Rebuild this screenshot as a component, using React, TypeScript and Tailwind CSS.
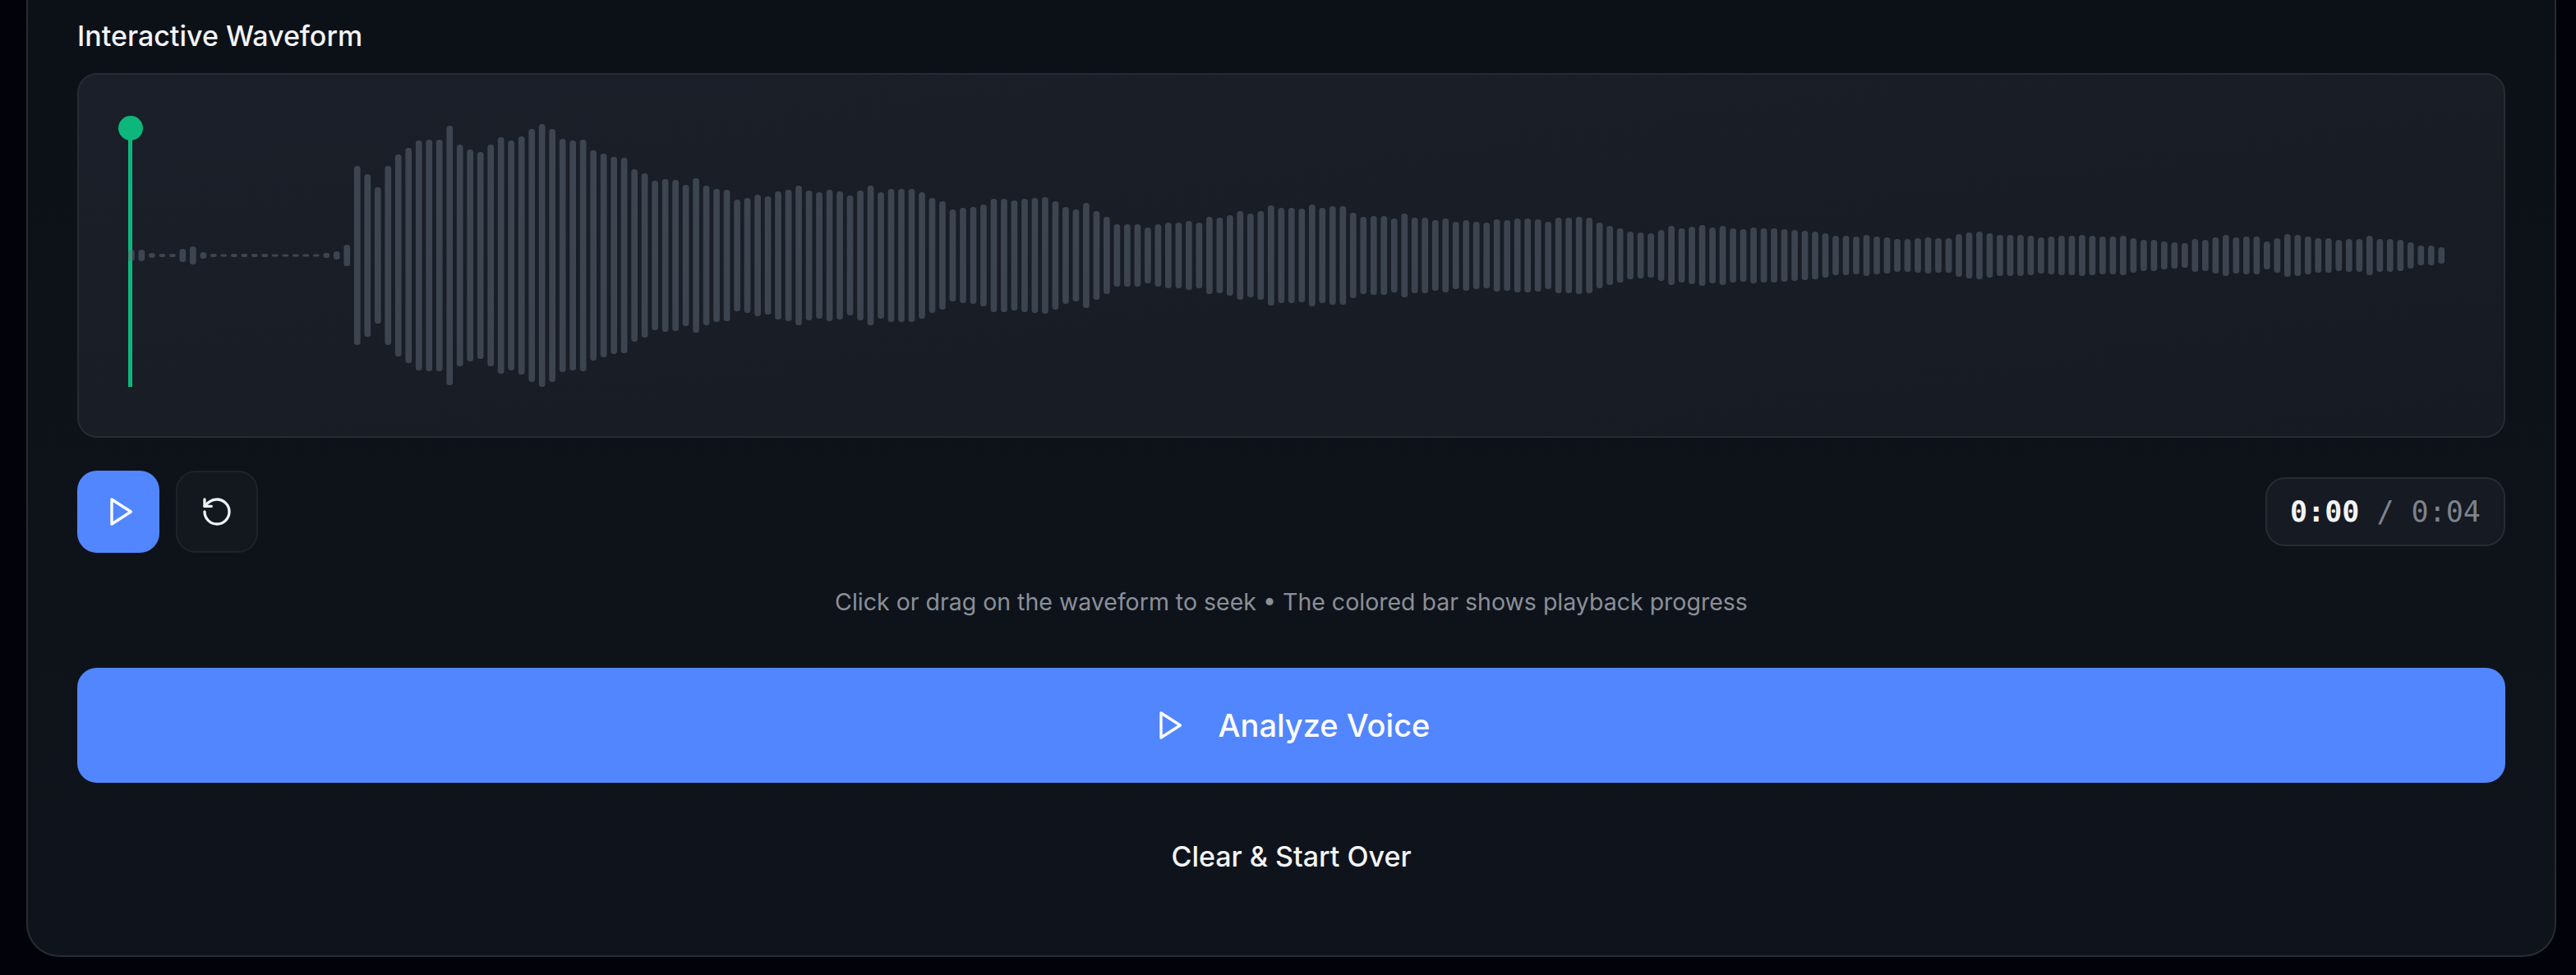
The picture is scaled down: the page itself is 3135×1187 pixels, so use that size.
const HALF_HEIGHTS = [
  7, 7, 3, 2, 2, 8, 11, 4, 2, 1.5, 2, 2, 2, 2, 1.5, 1.5, 1.5, 1.5, 1.5, 3, 5, 13, 109, 99, 83, 109, 123, 131,
  140, 141, 141, 158, 135, 129, 126, 135, 144, 140, 145, 154, 160, 154, 142, 140, 141, 128, 124, 120, 119, 105, 100, 91, 93, 92, 86, 94, 85, 81,
  80, 68, 70, 74, 72, 78, 80, 85, 79, 77, 80, 78, 73, 79, 85, 77, 81, 81, 81, 77, 70, 66, 56, 58, 59, 62,
  69, 69, 67, 69, 70, 71, 66, 59, 56, 64, 54, 47, 38, 38, 38, 34, 38, 40, 40, 42, 40, 47, 46, 49, 54, 51, 54, 61, 58, 58, 57, 62, 58, 60, 60, 52,
  47, 48, 48, 45, 51, 46, 46, 43, 45, 41, 43, 41, 40, 44, 43, 45, 45, 44, 41, 46,
  46, 47, 46, 40, 36, 33, 29, 28, 27, 31, 36, 33, 35, 37, 34, 36, 33, 32, 34, 33, 33, 32, 31, 30, 29, 27, 24, 24, 23, 25, 23, 22, 20, 20, 21, 22, 21, 21, 26, 28, 29, 27, 25, 25, 25, 24, 22, 23,
  24, 24, 25, 24, 23, 23, 24, 21, 19, 19, 17, 16, 15, 20, 19, 22, 25, 22, 23, 23, 17, 21, 26, 25, 23, 21, 21, 19, 20, 20, 24, 20, 20, 19, 16, 12, 12, 10,
];

// svg origin is the inside of the waveform box border
const FIRST_BAR_X = 60;
const BAR_PITCH = 12.495;
const BAR_WIDTH = 7.75;
const CENTER_Y = 220;

function Waveform() {
  return (
    <svg viewBox="0 0 2951 440" className="block w-full h-full">
      <rect x={60} y={65} width={5} height={315} fill="#0db77c" />
      <circle cx={63} cy={65} r={15} fill="#0db77c" />
      {HALF_HEIGHTS.map((h, i) => (
        <rect
          key={i}
          x={FIRST_BAR_X + i * BAR_PITCH}
          y={CENTER_Y - h}
          width={BAR_WIDTH}
          height={h * 2}
          rx={Math.min(3.5, h)}
          fill="#5f6b7a"
          fillOpacity={0.5}
        />
      ))}
    </svg>
  );
}

function PlayIcon({ className = "" }: { className?: string }) {
  return (
    <svg
      viewBox="0 0 24 24"
      fill="none"
      stroke="currentColor"
      strokeWidth={2}
      strokeLinecap="round"
      strokeLinejoin="round"
      className={`w-10 h-10 ${className}`}
    >
      <polygon points="6 3 20 12 6 21 6 3" />
    </svg>
  );
}

function RestartIcon() {
  return (
    <svg
      viewBox="0 0 24 24"
      fill="none"
      stroke="currentColor"
      strokeWidth={2}
      strokeLinecap="round"
      strokeLinejoin="round"
      className="w-10 h-10 text-[#f0f1f3]"
    >
      <path d="M3 12a9 9 0 1 0 9-9 9.75 9.75 0 0 0-6.74 2.74L3 8" />
      <path d="M3 3v5h5" />
    </svg>
  );
}

export default function App() {
  return (
    <div className="min-h-screen bg-[#02030a] pl-8 pr-6 pb-[22px] font-['Inter',sans-serif] text-white">
      <div className="rounded-b-[40px] border-2 border-t-0 border-[#282c36] bg-gradient-to-b from-[#0c1118] to-[#0f141c] px-[60px] pb-[80px]">
        <h3 className="pt-[22px] pb-[23px] text-[34px] leading-[44px] font-medium text-[#f3f4f6]">
          Interactive Waveform
        </h3>

        <div className="h-[444px] rounded-3xl border-2 border-[#272b35] bg-gradient-to-br from-[#1a1f29] to-[#161b23]">
          <Waveform />
        </div>

        <div className="mt-10 flex items-center justify-between">
          <div className="flex items-center gap-5">
            <button className="flex h-[100px] w-[100px] items-center justify-center rounded-3xl bg-[#5286ff] text-white">
              <PlayIcon className="ml-1" />
            </button>
            <button className="flex h-[100px] w-[100px] items-center justify-center rounded-3xl border-2 border-[#1d222b] bg-[#13181f]">
              <RestartIcon />
            </button>
          </div>
          <div className="flex h-[84px] w-[292px] items-center justify-center rounded-3xl border-2 border-[#272b35] bg-[#151a23] font-['DejaVu_Sans_Mono',monospace] text-[35px] whitespace-pre text-[#7f838b]">
            <span className="font-bold text-[#f3f4f6]">0:00</span> / 0:04
          </div>
        </div>

        <p className="mt-[40px] h-[40px] text-center text-[28.5px] leading-[40px] text-[#8b8f98]">
          Click or drag on the waveform to seek • The colored bar shows playback progress
        </p>

        <button className="mt-[60px] flex h-[140px] w-full items-center justify-center gap-10 rounded-3xl bg-[#5286ff] text-[38px] font-medium text-white">
          <PlayIcon />
          Analyze Voice
        </button>

        <button className="mt-[50px] block w-full h-[80px] text-center text-[34px] leading-[80px] font-medium text-[#f3f4f6]">
          Clear &amp; Start Over
        </button>
      </div>
    </div>
  );
}
